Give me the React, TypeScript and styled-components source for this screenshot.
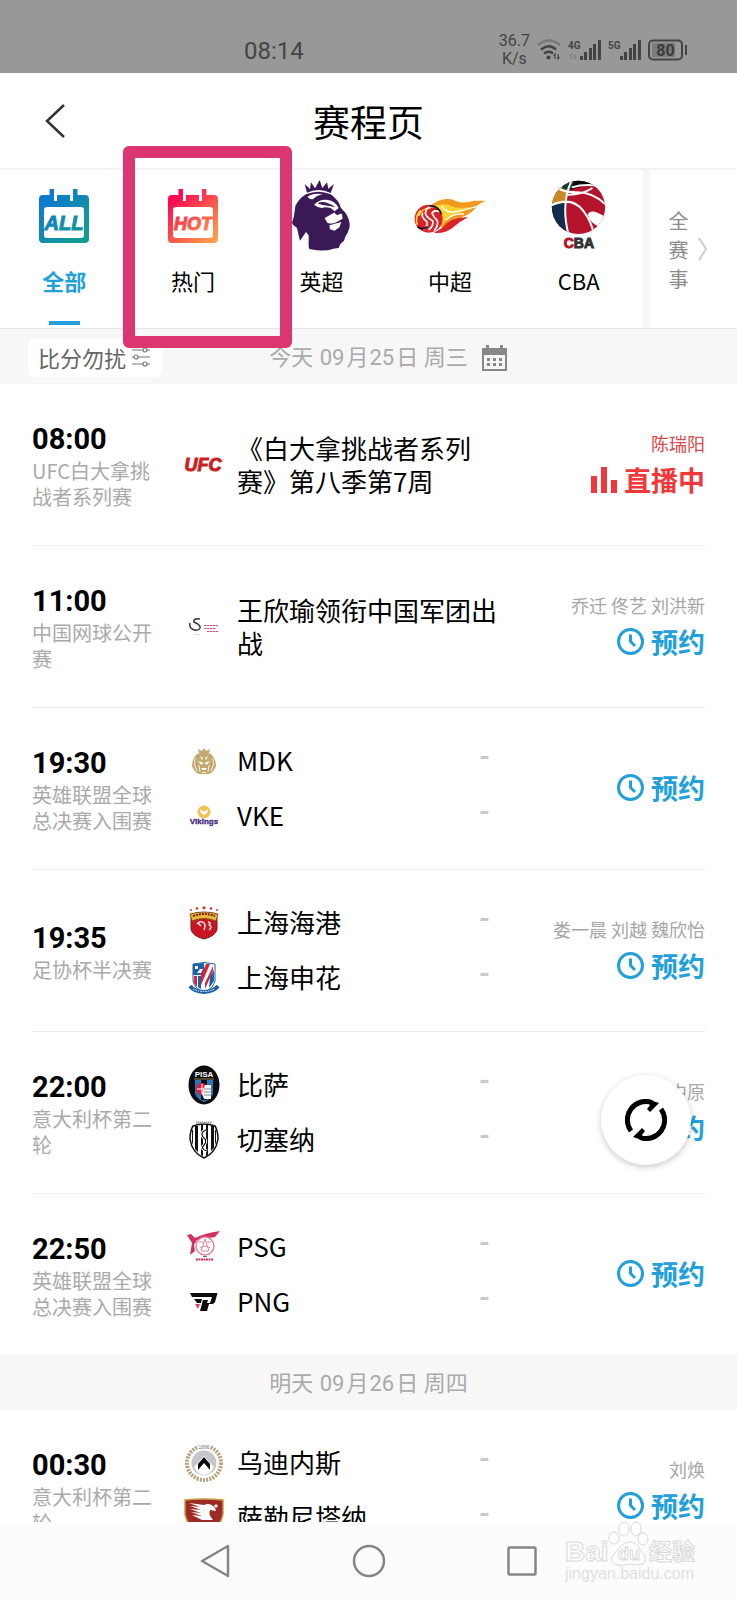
import React from 'react';
import styled, { createGlobalStyle } from 'styled-components';

const CJK = '"Noto Sans CJK SC", sans-serif';
const LATIN = 'Roboto, "Noto Sans CJK SC", sans-serif';
const BLUE = '#22a0dc';
const RED = '#f0383b';

const GlobalStyle = createGlobalStyle`
  * { box-sizing: border-box; }
  body { margin: 0; background: #fff; font-family: ${CJK}; color: #000; }
  button { border: 0; padding: 0; background: none; font: inherit; color: inherit; cursor: pointer; }
  ul { list-style: none; margin: 0; padding: 0; }
  svg { display: block; flex: none; }
`;

const Screen = styled.div`
  position: relative;
  display: flex;
  flex-direction: column;
  height: 100vh;
  overflow: hidden;
`;

/* ---------- status bar ---------- */

const StatusBar = styled.div`
  display: flex;
  flex: none;
  align-items: flex-end;
  justify-content: space-between;
  height: 73px;
  padding: 0 49px 5px 244px;
  background: #989898;
  color: #444;
  font-family: ${LATIN};
`;

const Clock = styled.time`
  padding-bottom: 2px;
  font-size: 24px;
  line-height: 30px;
`;

const Indicators = styled.div`
  display: flex;
  align-items: center;
  gap: 7px;
`;

const Speed = styled.span`
  font-size: 16px;
  line-height: 18px;
  text-align: center;
`;

/* ---------- header ---------- */

const Header = styled.header`
  display: grid;
  flex: none;
  grid-template-columns: 1fr auto 1fr;
  align-items: center;
  height: 97px;
  padding: 0 44px;
  border-bottom: 2px solid #f2f2f2;
`;

const BackButton = styled.button`
  justify-self: start;
`;

const Title = styled.h1`
  margin: 0;
  font-size: 37px;
  font-weight: 400;
  line-height: 48px;
`;

/* ---------- league tabs ---------- */

const TabBar = styled.nav`
  position: relative;
  display: flex;
  flex: none;
  border-bottom: 1px solid #e4e4e4;
`;

const Tab = styled.button<{ $active?: boolean }>`
  display: flex;
  flex: 1;
  flex-direction: column;
  align-items: center;
  height: 158px;
  padding-top: 10px;
  color: ${(p) => (p.$active ? BLUE : '#000')};
  font-size: 22px;
  font-weight: ${(p) => (p.$active ? 700 : 400)};
  line-height: 30px;

  &::after {
    content: '';
    width: 31px;
    height: 4px;
    margin-top: 26px;
    background: ${(p) => (p.$active ? BLUE : 'transparent')};
  }
`;

const TabIcon = styled.span`
  display: flex;
  align-items: center;
  justify-content: center;
  height: 72px;
  margin-bottom: 13px;
`;

const AllEvents = styled.button`
  display: flex;
  flex: none;
  align-items: center;
  justify-content: center;
  gap: 9px;
  width: 94px;
  padding-right: 12px;
  border-left: 7px solid #f7f7f7;
  color: #8c8c8c;
  font-size: 20px;
  line-height: 29px;
`;

const Stacked = styled.span`
  width: 22px;
  padding: 0 1px;
`;

const Highlight = styled.div`
  position: absolute;
  top: -24px;
  left: 123px;
  width: 169px;
  height: 202px;
  border: 12px solid #db3572;
  border-radius: 6px;
  pointer-events: none;
`;

/* ---------- schedule ---------- */

const Schedule = styled.main`
  flex: 1;
  min-height: 0;
  overflow: hidden;
`;

const DateBar = styled.div`
  display: grid;
  grid-template-columns: 1fr auto 1fr;
  align-items: center;
  gap: 14px;
  height: 55px;
  padding: 2px 28px 0;
  background: #f7f7f7;
`;

const FilterButton = styled.button`
  display: flex;
  grid-column: 1;
  justify-self: start;
  align-items: center;
  gap: 6px;
  height: 38px;
  padding: 0 12px 2px 10px;
  border-radius: 6px;
  background: #fff;
  color: #666;
  font-size: 22px;
  line-height: 30px;
`;

const DateText = styled.h2`
  display: flex;
  grid-column: 2;
  margin: 0;
  color: #aaa;
  font-family: ${LATIN};
  font-size: 22px;
  font-weight: 400;
  line-height: 30px;
  white-space: pre;
`;

const DateNumber = styled.span`
  padding: 0 2px 0 1px;
`;

const Match = styled.li`
  display: grid;
  grid-template-columns: 120px 40px minmax(0, 1fr) auto;
  align-items: center;
  height: 162px;
  margin: 0 32px;
  border-bottom: 1px solid #ededed;

  &:last-child {
    height: 161px;
    border-bottom: 0;
  }
`;

const When = styled.div`
  display: flex;
  flex-direction: column;
`;

const StartTime = styled.time`
  font-family: ${LATIN};
  font-size: 29px;
  font-weight: 700;
  line-height: 38px;
`;

const League = styled.span`
  color: #aaa;
  font-size: 20px;
  line-height: 26px;
`;

const Sides = styled.div`
  display: flex;
  grid-column: 2 / 4;
  flex-direction: column;
  margin-left: 32px;
`;

const Side = styled.div`
  display: flex;
  align-items: center;
  height: 55px;
`;

const LogoSlot = styled.span`
  display: flex;
  flex: none;
  align-items: center;
  justify-content: center;
  width: 40px;
  margin-right: 13px;
`;

const SideName = styled.span`
  width: 242px;
  padding-bottom: 2px;
  font-size: 26px;
  line-height: 36px;
`;

const Score = styled.span`
  padding-bottom: 8px;
  color: #c9c9c9;
  font-family: ${LATIN};
  font-size: 28px;
  font-weight: 700;
  line-height: 36px;
`;

const EventTitle = styled.h3`
  width: 262px;
  margin: 0;
  padding-bottom: 2px;
  font-size: 26px;
  font-weight: 400;
  line-height: 33px;
`;

const Aside = styled.div`
  display: flex;
  flex-direction: column;
  align-items: flex-end;
`;

const Hosts = styled.span<{ $live?: boolean }>`
  color: ${(p) => (p.$live ? '#d84a4c' : '#a6a6a6')};
  font-size: 18px;
  line-height: 32px;
`;

const Action = styled.button<{ $live?: boolean }>`
  display: flex;
  align-items: center;
  gap: 7px;
  padding-bottom: 2px;
  color: ${(p) => (p.$live ? RED : BLUE)};
  font-size: 27px;
  font-weight: 700;
  line-height: 42px;
`;

const RefreshButton = styled.button`
  position: absolute;
  right: 46px;
  bottom: 435px;
  display: flex;
  align-items: center;
  justify-content: center;
  width: 90px;
  height: 90px;
  border-radius: 50%;
  background: #fff;
  box-shadow: 0 2px 6px rgba(0, 0, 0, 0.22);
`;

/* ---------- system navigation ---------- */

const SystemNav = styled.nav`
  position: relative;
  display: flex;
  flex: none;
  align-items: center;
  justify-content: center;
  gap: 119px;
  height: 78px;
  background: #fcfcfc;
`;

const Watermark = styled.div`
  position: absolute;
  right: 38px;
  bottom: 16px;
  opacity: 0.9;
  pointer-events: none;
`;

/* ---------- icons ---------- */

const CalendarBadge = ({ id, from, to, label, size }: { id: string; from: string; to: string; label: string; size: number }) => (
  <svg width="50" height="54" viewBox="0 0 50 54">
    <defs>
      <linearGradient id={id} x1="0" y1="0" x2="50" y2="54" gradientUnits="userSpaceOnUse">
        <stop offset="0.15" stopColor={from} />
        <stop offset="0.95" stopColor={to} />
      </linearGradient>
    </defs>
    <path
      fill={`url(#${id})`}
      fillRule="evenodd"
      d="M4 6H10.500V0H15V12H18V6H31V12H34V0H38.500V6H46Q50 6 50 10V50Q50 54 46 54H4Q0 54 0 50V10Q0 6 4 6ZM8 18Q5 18 5 21V46Q5 49 8 49H42Q45 49 45 46V21Q45 18 42 18Z"
    />
    <text
      x="25"
      y="41"
      textAnchor="middle"
      fill={`url(#${id})`}
      fontFamily="Liberation Sans Narrow, Liberation Sans, sans-serif"
      fontSize={size}
      fontWeight="700"
      fontStyle="italic"
      stroke={`url(#${id})`}
      strokeWidth="1"
    >
      {label}
    </text>
  </svg>
);

const LionIcon = () => (
  <svg width="58" height="72" viewBox="0 0 174 216">
    <path fill="#3a1956" d="M45 38L38 12L54 27L57 7L69 25L83 0L91 24L105 7L109 26L126 12L116 39Q80 22 45 38Z" />
    <path
      fill="#3a1956"
      d="M42 43Q80 28 116 43Q140 60 147 84L160 98Q174 118 173 140Q169 158 160 170L156 182L145 192L140 204L124 206Q98 216 56 208Q49 209 50 192L50 166L42 156L24 182Q20 168 15 144L3 134L0 128L6 108L10 78Q20 56 42 43Z"
    />
    <path fill="#fff" d="M46 50Q62 38 92 42Q74 46 62 58Q52 58 46 50Z" />
    <path fill="#fff" d="M66 74Q84 56 108 60Q128 62 140 84L128 94L116 84Q98 80 90 84Q78 84 66 74Z" />
    <path fill="#3a1956" d="M76 70Q92 62 108 70Q122 74 130 82L112 78Q94 78 76 70Z" />
    <path fill="#fff" d="M98 114Q116 104 130 96L150 102L152 116L134 126Q120 134 106 128ZM112 136L148 126L142 142L128 152L114 148Z" />
    <path fill="#3a1956" d="M126 98L136 106L148 100L142 90Z" />
  </svg>
);

const FlameBallIcon = () => (
  <svg width="72" height="36" viewBox="0 0 216 108">
    <path fill="#f0991d" d="M46 26Q76 -2 112 4Q142 20 180 8L215 8Q194 18 188 24Q182 38 160 50Q120 66 86 96L60 40Z" />
    <path fill="#fbd330" d="M54 28Q90 12 112 24Q130 34 170 26Q140 44 118 50Q96 60 82 86Z" />
    <path fill="#d8232a" d="M84 90Q110 56 162 58Q134 72 112 92Q88 108 60 104Z" />
    <path fill="none" stroke="#fff" strokeWidth="4" d="M82 24Q96 44 118 42T186 26M96 66Q120 44 150 48" />
    <circle cx="44" cy="62" r="42" fill="#d8232a" />
    <path fill="none" stroke="#fbd330" strokeWidth="5" d="M14 54Q24 30 50 30M10 80Q2 56 20 36" />
    <path fill="none" stroke="#fff" strokeWidth="5" d="M66 26Q36 22 34 46Q38 60 56 68Q60 84 44 96M80 42Q60 34 54 46Q60 58 70 68Q74 84 60 98M26 44Q20 58 38 70Q44 82 28 94" />
    <path fill="none" stroke="#111" strokeWidth="5" d="M46 24Q72 22 82 48M10 86Q24 98 40 86" />
  </svg>
);

const CbaIcon = () => (
  <svg width="55" height="72" viewBox="0 0 164 216">
    <defs>
      <clipPath id="cba-ball">
        <circle cx="82" cy="82" r="80" />
      </clipPath>
    </defs>
    <g clipPath="url(#cba-ball)">
      <rect width="164" height="164" fill="#b5132b" />
      <path fill="#c98a25" d="M0 20L56 0L46 40L44 76L0 76Z" />
      <path fill="#12402f" d="M30 0H80L60 30L34 28Z" />
      <path fill="#0a0a0a" d="M72 0H132L140 16Q96 14 58 30Z" />
      <path fill="#0f2c4f" d="M0 74L44 68Q34 120 60 170H0Z" />
      <path
        fill="none"
        stroke="#fff"
        strokeWidth="6"
        d="M62 22Q100 10 146 18M62 0Q28 70 52 164M-4 78Q60 46 96 92Q122 126 128 164M18 24Q46 38 72 36M60 38Q120 30 164 74M44 44Q90 46 124 24"
      />
      <path fill="#fff" d="M164 112Q118 82 110 104Q118 132 146 140Z" />
    </g>
    <text x="83" y="204" textAnchor="middle" fontFamily="Liberation Sans, sans-serif" fontSize="42" fontWeight="700" fill="#333" stroke="#333" strokeWidth="3">
      <tspan fill="#b5132b" stroke="#b5132b">C</tspan>BA
    </text>
  </svg>
);

const ClockIcon = () => (
  <svg width="27" height="27" viewBox="0 0 27 27" fill="none" stroke={BLUE} strokeWidth="3">
    <circle cx="13.5" cy="13.5" r="12" />
    <path d="M13.5 6.5V13.5L18 18" />
  </svg>
);

const LiveIcon = () => (
  <svg width="26" height="26" viewBox="0 0 26 26" fill={RED}>
    <path d="M0 9H6V26H0ZM10 0H16V26H10ZM20 13H26V26H20Z" />
  </svg>
);

const UfcLogo = () => (
  <svg width="40" height="24" viewBox="0 0 40 24">
    <text x="19" y="18" textAnchor="middle" fontFamily="Liberation Sans, sans-serif" fontSize="18" fontWeight="700" fontStyle="italic" fill="#cc1f1f" stroke="#cc1f1f">
      UFC
    </text>
  </svg>
);

const OpenLogo = () => (
  <svg width="30" height="18" viewBox="0 0 30 18">
    <path fill="none" stroke="#333" strokeWidth="1.500" d="M11 1Q4 0 5 4Q12 7 11 10Q9 14 3 11M1 5Q0 9 3 11" />
    <path fill="none" stroke="#c8557a" d="M15 7.500H29M15 10.500H27M18 13.500H29" strokeDasharray="2.500 0.500" />
    <path stroke="#ddd" d="M5 16.500H11" />
  </svg>
);

const MdkLogo = () => (
  <svg width="26" height="27" viewBox="0 0 26 27">
    <path fill="#c2a970" d="M8 5L7 1L11 3L13 0L15 3L19 1L18 5Z" />
    <path fill="#c2a970" d="M6 6Q13 3 20 6Q25 11 25 18Q23 24 18 26H8Q3 24 1 18Q1 11 6 6Z" />
    <path fill="#fff" d="M7 13L12 14.500V16L10 16.500ZM19 13L14 14.500V16L16 16.500ZM10 20H16L14.500 22H11.500ZM9 8L12 10L11 12ZM17 8L14 10L15 12Z" />
    <path fill="none" stroke="#fff" strokeWidth="0.800" d="M4 10Q2 17 6 23M22 10Q24 17 20 23M8 17L9 24M18 17L17 24M11 24.500H15" />
  </svg>
);

const VkeLogo = () => (
  <svg width="28" height="22" viewBox="0 0 28 22">
    <circle cx="14" cy="7" r="6.500" fill="#f0c34e" />
    <path fill="#fff" d="M10 4Q11 6 14 6Q17 6 18 4Q18.500 8 14 10Q9.500 8 10 4Z" />
    <text x="14" y="19" textAnchor="middle" fontFamily="Liberation Sans, sans-serif" fontSize="8" fontWeight="700" fill="#43267a" stroke="#43267a" strokeWidth="0.300">
      Vikings
    </text>
  </svg>
);

const PortLogo = () => (
  <svg width="30" height="34" viewBox="0 0 30 34">
    <path fill="#c71521" stroke="#7c1a14" d="M2 12Q15 6 28 12V23Q27 30 15 33Q3 30 2 23Z" />
    <path fill="#e8b93a" stroke="#8a4a14" d="M1 8Q15 4 29 8L27 15Q15 10 3 15Z" />
    <path stroke="#7c1a14" strokeWidth="2" strokeDasharray="2 1" fill="none" d="M4 10Q15 6 26 10" />
    <g fill="#c8322a">
      <circle cx="2" cy="4" r="1" />
      <circle cx="8" cy="2.500" r="1.300" />
      <circle cx="15" cy="1.800" r="1.600" />
      <circle cx="22" cy="2.500" r="1.300" />
      <circle cx="28" cy="4" r="1" />
    </g>
    <path fill="none" stroke="#fff" strokeWidth="1.300" d="M8 18Q11 14 15 17Q17 19 15 24M9 17L12 20M19 16Q23 17 20 19Q24 21 20 24" />
  </svg>
);

const ShenhuaLogo = () => (
  <svg width="30" height="34" viewBox="0 0 30 34">
    <path fill="#fff" stroke="#1c62a5" d="M4 3Q15 0 26 3V20Q24 28 15 31Q6 28 4 20Z" />
    <path fill="#1c62a5" d="M4 3L15 2V14H4Z" />
    <path fill="#d3263c" d="M5 15H8V26L5 22ZM17 3H21L12 24V14ZM24 5V10L16 28V22Z" />
    <path fill="#1c62a5" d="M9 15H12V28L9 26ZM21 16L25 9V20L20 27Z" />
    <path fill="#fff" d="M6 5H9V8H6ZM11 8H14L12 12H8Z" />
    <path fill="none" stroke="#1c62a5" strokeWidth="4" d="M1 25Q4 30 15 31Q26 30 29 25" />
    <path fill="none" stroke="#fff" strokeDasharray="1.500 1" d="M4 28Q15 33 26 28" />
  </svg>
);

const PisaLogo = () => (
  <svg width="32" height="40" viewBox="0 0 32 40">
    <ellipse cx="16" cy="20" rx="15.500" ry="19.500" fill="#0b0b10" />
    <path fill="#2877b8" d="M7 15H25V29Q22 35 16 37Q10 35 7 29Z" />
    <path fill="#0b0b10" d="M13 15H19V35H13Z" />
    <text x="16" y="12" textAnchor="middle" fontFamily="Liberation Sans, sans-serif" fontSize="8" fontWeight="700" fill="#fff">
      PISA
    </text>
    <path stroke="#b9a15c" strokeWidth="0.800" d="M6 14H26" />
    <circle cx="14" cy="24" r="6" fill="#d7213c" />
    <path stroke="#fff" strokeWidth="1" d="M14 19V29M9 24H19" />
    <path fill="#fff" d="M17 20H23V34H16L14 29Z" />
    <path stroke="#333" strokeWidth="0.600" d="M16 24H23M16 27H23M16 30H23" />
  </svg>
);

const CesenaLogo = () => (
  <svg width="30" height="38" viewBox="0 0 30 38">
    <path fill="#fff" stroke="#111" strokeWidth="1.500" d="M4 5Q15 1 26 5Q29 10 29 18Q27 32 15 37Q3 32 1 18Q1 10 4 5Z" />
    <path fill="#111" d="M6 5H9V31L6 28ZM12 4H14V35L12 34ZM17 4H19V34L17 35ZM22 5H25V27L22 30ZM3 9H4V24L3 21ZM27 9H26V24L27 21Z" />
    <path fill="none" stroke="#fff" strokeWidth="3" d="M17 9Q11 11 14 16Q19 20 15 24Q11 28 18 30" />
    <path fill="none" stroke="#111" strokeWidth="1.200" d="M17 9Q11 11 14 16Q19 20 15 24Q11 28 18 30" />
    <path stroke="#999" strokeWidth="2" strokeDasharray="1.500 0.500" d="M7 1.500H23" />
  </svg>
);

const PsgLogo = () => (
  <svg width="34" height="32" viewBox="0 0 34 32">
    <path fill="#d3305f" d="M0 4L4 3L8 7Q18 2 33 0L28 6L10 9L7 14L8 20L3 24L5 12Z" />
    <circle cx="18" cy="15" r="9" fill="#fff" stroke="#e0829b" strokeWidth="1.400" />
    <path fill="none" stroke="#e0829b" d="M18 8L14 20M18 8L22 20M13 17Q18 13 23 17M12 11H16M20 11H24M15 20H21" />
    <path stroke="#d3305f" strokeWidth="2" strokeDasharray="2 0.500" d="M9 28.500H26" />
    <path stroke="#666" d="M16 25.500H20" />
  </svg>
);

const PngLogo = () => (
  <svg width="28" height="20" viewBox="0 0 28 20">
    <path fill="#0b0b0b" d="M0 1H27Q28 1 27 3L25 10Q24 12 22 12H19L17 19H10L13 8H18L17 11H20L22 5H2Z" />
    <path fill="#0b0b0b" d="M4 7H12L11 11H7Z" />
    <path fill="#d4406e" d="M5 12H10L8 17Z" />
  </svg>
);

const UdineseLogo = () => (
  <svg width="40" height="40" viewBox="0 0 40 40">
    <circle cx="20" cy="20" r="17" fill="none" stroke="#b5a177" strokeWidth="4" strokeDasharray="2 1.200" />
    <circle cx="20" cy="20" r="12.500" fill="#c4c6ca" />
    <path fill="#fff" d="M20 13L30 24Q26 32 20 32Q14 32 10 24Z" />
    <path fill="#0a0a0a" d="M20 14L26 21V27L20 20L14 27V21Z" />
    <path stroke="#fff" strokeWidth="5" d="M14 3H26" />
    <text x="20" y="6" textAnchor="middle" fontFamily="Liberation Sans, sans-serif" fontSize="5" fill="#777">
      1896
    </text>
  </svg>
);

const SalernitanaLogo = () => (
  <svg width="40" height="40" viewBox="0 0 40 40">
    <path fill="#9c2a25" stroke="#c99a3e" strokeWidth="1.500" d="M1 2Q20 0 39 2V16Q36 32 20 39Q4 32 1 16Z" />
    <path fill="#fff" d="M5 5L20 7Q26 4 31 10L32 13L26 12Q24 16 29 22H18L8 17L18 18L7 14L17 15L6 11L17 12L6 8L16 9ZM32 6L34 8L32 10L30 8Z" />
  </svg>
);

/* ---------- data ---------- */

type Team = { name: string; logo: React.ReactNode };
type Entry = {
  time: string;
  league: string;
  event?: Team;
  teams?: Team[];
  hosts?: string;
  live?: boolean;
};

const today: Entry[] = [
  { time: '08:00', league: 'UFC白大拿挑战者系列赛', event: { name: '《白大拿挑战者系列赛》第八季第7周', logo: <UfcLogo /> }, hosts: '陈瑞阳', live: true },
  { time: '11:00', league: '中国网球公开赛', event: { name: '王欣瑜领衔中国军团出战', logo: <OpenLogo /> }, hosts: '乔迁 佟艺 刘洪新' },
  { time: '19:30', league: '英雄联盟全球总决赛入围赛', teams: [{ name: 'MDK', logo: <MdkLogo /> }, { name: 'VKE', logo: <VkeLogo /> }] },
  { time: '19:35', league: '足协杯半决赛', teams: [{ name: '上海海港', logo: <PortLogo /> }, { name: '上海申花', logo: <ShenhuaLogo /> }], hosts: '娄一晨 刘越 魏欣怡' },
  { time: '22:00', league: '意大利杯第二轮', teams: [{ name: '比萨', logo: <PisaLogo /> }, { name: '切塞纳', logo: <CesenaLogo /> }], hosts: '中原' },
  { time: '22:50', league: '英雄联盟全球总决赛入围赛', teams: [{ name: 'PSG', logo: <PsgLogo /> }, { name: 'PNG', logo: <PngLogo /> }] },
];

const tomorrow: Entry[] = [
  { time: '00:30', league: '意大利杯第二轮', teams: [{ name: '乌迪内斯', logo: <UdineseLogo /> }, { name: '萨勒尼塔纳', logo: <SalernitanaLogo /> }], hosts: '刘焕' },
];

const tabs = [
  { label: '全部', icon: <CalendarBadge id="badge-all" from="#0f77d4" to="#12a08c" label="ALL" size={20} />, active: true },
  { label: '热门', icon: <CalendarBadge id="badge-hot" from="#fb0a50" to="#ffa24a" label="HOT" size={18} /> },
  { label: '英超', icon: <LionIcon /> },
  { label: '中超', icon: <FlameBallIcon /> },
  { label: 'CBA', icon: <CbaIcon /> },
];

const MatchRow = ({ entry }: { entry: Entry }) => (
  <Match>
    <When>
      <StartTime>{entry.time}</StartTime>
      <League>{entry.league}</League>
    </When>
    <Sides>
      {entry.event && (
        <Side>
          <LogoSlot>{entry.event.logo}</LogoSlot>
          <EventTitle>{entry.event.name}</EventTitle>
        </Side>
      )}
      {entry.teams?.map((team) => (
        <Side key={team.name}>
          <LogoSlot>{team.logo}</LogoSlot>
          <SideName>{team.name}</SideName>
          <Score>-</Score>
        </Side>
      ))}
    </Sides>
    <Aside>
      {entry.hosts && <Hosts $live={entry.live}>{entry.hosts}</Hosts>}
      <Action type="button" $live={entry.live}>
        {entry.live ? <LiveIcon /> : <ClockIcon />}
        {entry.live ? '直播中' : '预约'}
      </Action>
    </Aside>
  </Match>
);

const DateLabel = ({ day, month, date, week }: { day: string; month: string; date: string; week: string }) => (
  <DateText>
    {day} <DateNumber>{month}</DateNumber>月<DateNumber>{date}</DateNumber>日 {week}
  </DateText>
);

const SignalBars = ({ label, arrows }: { label: string; arrows?: boolean }) => (
  <svg width="33" height="22" viewBox="0 0 33 22" fill="#444">
    <text x="0" y="10" fontFamily="Roboto, sans-serif" fontSize="10" fontWeight="700">
      {label}
    </text>
    <path d="M12 17H15V21H12ZM16 13H19V21H16ZM21 9H24V21H21ZM25 5H28V21H25ZM30 1H33V21H30Z" />
    {arrows && <path fill="none" stroke="#777" d="M3.500 20V15L1.500 17M6.500 15V20L8.500 18" />}
  </svg>
);

export default function App() {
  return (
    <Screen>
      <GlobalStyle />
      <StatusBar>
        <Clock>08:14</Clock>
        <Indicators>
          <Speed>
            36.7
            <br />
            K/s
          </Speed>
          <svg width="24" height="22" viewBox="0 0 24 22" fill="none" stroke="#444" strokeWidth="2.500">
            <path stroke="#777" d="M1 6Q12 -3 23 6" />
            <path d="M4 10.500Q12 4 19 10.500M7 14.500Q12 11 16 14.500" />
            <circle cx="11.500" cy="18.500" r="2" fill="#444" stroke="none" />
            <path strokeWidth="1.200" d="M18 20V15L16.500 17M21 15V20L22.500 18" />
          </svg>
          <SignalBars label="4G" arrows />
          <SignalBars label="5G" />
          <svg width="40" height="22" viewBox="0 0 40 22">
            <rect x="1" y="1.500" width="33" height="19" rx="4" fill="none" stroke="#444" strokeWidth="2" />
            <rect x="4" y="4" width="23" height="14" fill="#7b7b7b" />
            <path fill="#444" d="M37 6H39V16H37Z" />
            <text x="17.500" y="16.500" textAnchor="middle" fontFamily="Roboto, sans-serif" fontSize="16" fontWeight="700" fill="#3c3c3c">
              80
            </text>
          </svg>
        </Indicators>
      </StatusBar>

      <Header>
        <BackButton type="button" aria-label="返回">
          <svg width="22" height="36" viewBox="0 0 22 36" fill="none" stroke="#333" strokeWidth="2.500">
            <path d="M20 2L3 18L20 34" />
          </svg>
        </BackButton>
        <Title>赛程页</Title>
      </Header>

      <TabBar>
        {tabs.map((tab) => (
          <Tab key={tab.label} type="button" $active={tab.active}>
            <TabIcon>{tab.icon}</TabIcon>
            {tab.label}
          </Tab>
        ))}
        <AllEvents type="button">
          <Stacked>全赛事</Stacked>
          <svg width="9" height="24" viewBox="0 0 9 24" fill="none" stroke="#ccc" strokeWidth="2">
            <path d="M1 1L8 12L1 23" />
          </svg>
        </AllEvents>
        <Highlight />
      </TabBar>

      <Schedule>
        <DateBar>
          <FilterButton type="button">
            比分勿扰
            <svg width="18" height="20" viewBox="0 0 18 20" fill="#fff" stroke="#777" strokeWidth="1.200">
              <path d="M0 3H18M0 10H18M0 17H18" />
              <circle cx="13" cy="3" r="2" />
              <circle cx="4" cy="10" r="2" />
              <circle cx="13" cy="17" r="2" />
            </svg>
          </FilterButton>
          <DateLabel day="今天" month="09" date="25" week="周三" />
          <svg width="25" height="26" viewBox="0 0 25 26" fill="#888">
            <path d="M0 3H4V0H7V3H18V0H21V3H25V26H0ZM2 10V24H23V10Z" fillRule="evenodd" />
            <path d="M5 13H8V16H5ZM11 13H14V16H11ZM17 13H20V16H17ZM5 18H8V21H5ZM11 18H14V21H11ZM17 18H20V21H17Z" />
          </svg>
        </DateBar>
        <ul>
          {today.map((entry) => (
            <MatchRow key={entry.time} entry={entry} />
          ))}
        </ul>
        <DateBar>
          <DateLabel day="明天" month="09" date="26" week="周四" />
        </DateBar>
        <ul>
          {tomorrow.map((entry) => (
            <MatchRow key={entry.time} entry={entry} />
          ))}
        </ul>
      </Schedule>

      <RefreshButton type="button" aria-label="刷新">
        <svg width="42" height="42" viewBox="0 0 42 42" fill="none" stroke="#000" strokeWidth="5">
          <path d="M6 32A18.500 18.500 0 0 1 27 3.500M36 10A18.500 18.500 0 0 1 15 38.500" />
          <path fill="#000" stroke="none" d="M22 0L34 4L25 13L22 10L25 6ZM20 42L8 38L17 29L20 32L17 36Z" />
        </svg>
      </RefreshButton>

      <SystemNav>
        <svg width="34" height="34" viewBox="0 0 34 34" fill="none" stroke="#858585" strokeWidth="2.500" strokeLinejoin="round">
          <path d="M3 17L29 2V32Z" />
        </svg>
        <svg width="34" height="34" viewBox="0 0 34 34" fill="none" stroke="#858585" strokeWidth="2.500">
          <circle cx="17" cy="17" r="15" />
        </svg>
        <svg width="34" height="34" viewBox="0 0 34 34" fill="none" stroke="#858585" strokeWidth="2.500">
          <rect x="3.500" y="3.500" width="27" height="27" rx="1" />
        </svg>
        <Watermark>
          <svg width="136" height="64" viewBox="0 0 136 64" fill="#fff" stroke="#d6d6d6">
            <path d="M67 22Q74 22 78 31Q86 38 80 44Q72 46 66 44Q56 47 50 43Q46 37 54 31Q60 22 67 22Z" />
            <ellipse cx="61" cy="9" rx="5" ry="7" />
            <ellipse cx="73" cy="9" rx="5" ry="7" />
            <ellipse cx="51" cy="18" rx="5" ry="6" />
            <ellipse cx="80" cy="19" rx="5" ry="6" />
            <g fontFamily="Liberation Sans, sans-serif" fontWeight="700">
              <text x="2" y="41" fontSize="28">Bai</text>
              <text x="55" y="40" fontSize="18">du</text>
              <text x="86" y="40" fontSize="23" fontFamily="Noto Sans CJK SC, sans-serif">经验</text>
            </g>
            <text x="2" y="59" fontSize="16" fontFamily="Liberation Sans, sans-serif" fill="#dedede" stroke="none">
              jingyan.baidu.com
            </text>
          </svg>
        </Watermark>
      </SystemNav>
    </Screen>
  );
}
